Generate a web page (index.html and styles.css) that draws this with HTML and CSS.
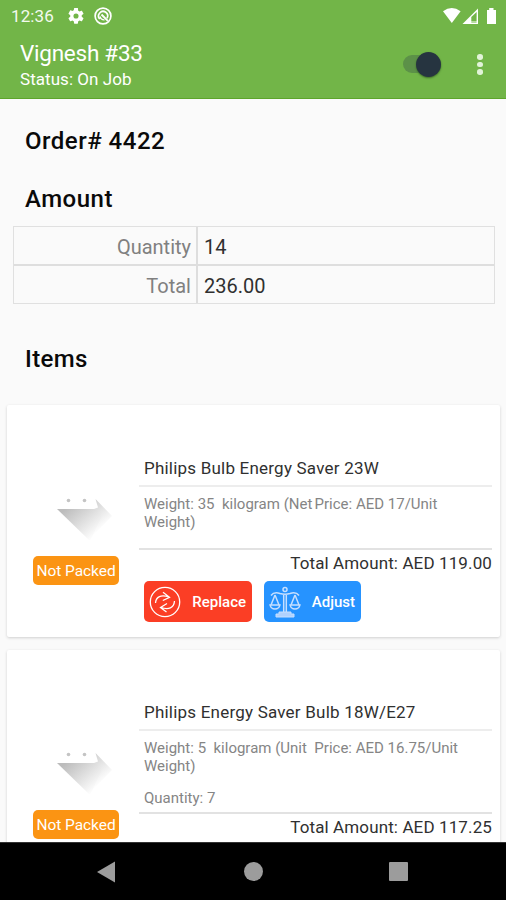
FILE: index.html
```html
<!DOCTYPE html>
<html lang="en">
<head>
<meta charset="utf-8">
<title>Order 4422</title>
<link rel="stylesheet" href="styles.css">
</head>
<body>
<svg class="defs" width="0" height="0">
  <defs>
    <linearGradient id="shade" gradientUnits="userSpaceOnUse" x1="14" y1="8" x2="40" y2="38">
      <stop offset="0" stop-color="#bcbcbc"/><stop offset="1" stop-color="#fefefe"/>
    </linearGradient>
    <linearGradient id="shade-side" gradientUnits="userSpaceOnUse" x1="36" y1="6" x2="52" y2="26">
      <stop offset="0" stop-color="#d2d2d2"/><stop offset="1" stop-color="#fefefe"/>
    </linearGradient>
    <symbol id="bag" viewBox="0 0 60 46">
      <path d="M39.500 2 56 19 33 43 38 12 42 10.500Z" fill="url(#shade-side)"/>
      <path d="M1 12H39L46 19 34 44Z" fill="url(#shade)"/>
      <circle cx="12.5" cy="3.5" r="1.8" fill="#c4c4c4"/><circle cx="28.5" cy="3.5" r="1.8" fill="#c4c4c4"/>
    </symbol>
  </defs>
</svg>
<div class="screen">
  <header class="top">
    <div class="status">
      <span class="clock">12:36</span>
      <svg class="gear" viewBox="2 2 20 20"><path fill="#fff" fill-rule="evenodd" d="M19.14 12.94c.04-.3.06-.61.06-.94s-.02-.64-.07-.94l2.03-1.58a.49.49 0 0 0 .12-.61l-1.92-3.32a.49.49 0 0 0-.59-.22l-2.39.96a7 7 0 0 0-1.62-.94l-.36-2.54A.48.48 0 0 0 13.92 2h-3.84a.48.48 0 0 0-.48.41l-.36 2.54a7 7 0 0 0-1.62.94l-2.39-.96a.48.48 0 0 0-.59.22L2.72 8.87a.48.48 0 0 0 .12.61l2.03 1.58a7 7 0 0 0 0 1.88l-2.03 1.58a.49.49 0 0 0-.12.61l1.92 3.32c.12.22.37.29.59.22l2.39-.96c.5.38 1.03.7 1.62.94l.36 2.54c.05.24.24.41.48.41h3.84c.24 0 .44-.17.47-.41l.36-2.54a7 7 0 0 0 1.62-.94l2.39.96c.22.08.47 0 .59-.22l1.92-3.32a.48.48 0 0 0-.12-.61zM12 15.2a3.2 3.2 0 1 1 0-6.4 3.2 3.2 0 0 1 0 6.4z"/></svg>
      <svg class="sync" viewBox="0 0 18 18" fill="none" stroke="#fff"><circle cx="9" cy="9" r="7.9" stroke-width="1.7"/><path d="M5.8 12A4.500 4.500 0 1 1 13 11.200" stroke-width="1.7"/><path d="M7.500 7.500 13.800 13.800" stroke-width="1.9"/><path d="M6 9.500Q7 13 10.500 12.800" stroke-width="1.3"/></svg>
      <svg class="signals" viewBox="0 0 56 18"><path d="M1 4.2Q9.8-2.4 18.6 4.2L9.8 16Z" fill="#fff"/><path d="M20.5 17 36 1.5V17Z" fill="#fff"/><path d="M29.300 10 34.600 5V14H29.300Z" fill="#72b548"/><path d="M29.300 14H34.600V16H29.300Z" fill="#b5db9e"/><path d="M45 3H47.2V1H51.5V3H54V17H45Z" fill="#fff"/></svg>
    </div>
    <div class="bar">
      <div class="who"><div class="name"><span>Vignesh #33</span></div><div class="job"><span>Status: On Job</span></div></div>
      <div class="switch"><div class="thumb"></div></div>
      <div class="more"><i></i><i></i><i></i></div>
    </div>
  </header>
  <main class="content">
    <h2 class="order">Order# 4422</h2>
    <h2 class="amount">Amount</h2>
    <div class="table">
      <div class="cell key">Quantity</div><div class="cell">14</div>
      <div class="cell key">Total</div><div class="cell">236.00</div>
    </div>
    <h2 class="items">Items</h2>
    <article class="card">
      <div class="thumbcol"><svg class="pic"><use href="#bag"/></svg><div class="badge">Not Packed</div></div>
      <div class="info">
        <div class="title">Philips Bulb Energy Saver 23W</div>
        <div class="desc"><div>Weight: 35&nbsp; kilogram (Net<span class="thin"> </span>Price: AED 17/Unit</div><div>Weight)</div></div>
        <div class="total">Total Amount: AED 119.00</div>
        <div class="actions">
          <div class="btn red">
            <svg width="32" height="32" viewBox="0 0 32 32" fill="none" stroke="#fff" stroke-width="1.3"><circle cx="16" cy="16" r="14.7"/><path d="M6.500 17C7 10.500 12 8.500 20 11M14 6.200 20.500 11.300 13.800 14.500M25.500 15C25 22 19.500 24 12 21.500M18 17.500 11.500 21.500 17.500 26"/></svg>
            <span>Replace</span>
          </div>
          <div class="btn blue">
            <svg width="32" height="32" viewBox="0 0 32 32" fill="none" stroke="#c6dfff" stroke-width="1.5"><circle cx="16" cy="3.500" r="2"/><path d="M2 9.500Q5 5.500 11 7.500Q16 9 21 7.500Q27 5.500 30 9.500M14.700 8V26M17.300 8V26M6 9 2 19M6 9 10 19M26 9 22 19M26 9 30 19"/><path d="M1 19H11Q10 23 6 23Q2 23 1 19ZM21 19H31Q30 23 26 23Q22 23 21 19Z" stroke-width="1.300"/><path d="M10 26H22V28H25V31H7V28H10Z" fill="#b0d1fd" stroke-width="1"/></svg>
            <span>Adjust</span>
          </div>
        </div>
      </div>
    </article>
    <article class="card second">
      <div class="thumbcol"><svg class="pic"><use href="#bag"/></svg><div class="badge">Not Packed</div></div>
      <div class="info">
        <div class="title">Philips Energy Saver Bulb 18W/E27</div>
        <div class="desc tall"><div>Weight: 5&nbsp; kilogram (Unit&nbsp; Price: AED 16.75/Unit</div><div>Weight)</div><div class="qty">Quantity: 7</div></div>
        <div class="total">Total Amount: AED 117.25</div>
      </div>
    </article>
  </main>
  <nav class="nav">
    <svg width="19" height="22" viewBox="0 0 19 22"><path d="M0 11 18 .500V21.500Z" fill="#9c9c9c"/></svg>
    <div class="home"></div>
    <div class="recent"></div>
  </nav>
</div>
</body>
</html>
```
FILE: styles.css
```css
* { box-sizing: border-box; }
body { margin: 0; font-family: Roboto, "Liberation Sans", sans-serif; background: #fafafa; color: #222; }
.defs { display: block; height: 0; }
.screen { width: 506px; height: 900px; display: flex; flex-direction: column; overflow: hidden; white-space: nowrap; }
.top { height: 99px; flex: none; background: #72b548; border-bottom: 1px solid #5da52b; color: #fff; }
.status { height: 32px; display: flex; align-items: center; padding: 0 8px 0 11px; }
.clock { font-size: 17px; letter-spacing: .1px; width: 57px; color: #f3faee; }
.gear { width: 16px; height: 16px; }
.sync { width: 18px; height: 18px; margin-left: 10px; }
.signals { width: 56px; height: 18px; margin-left: auto; }
.bar { display: flex; height: 65px; padding-left: 20px; }
.who { width: 383px; padding-top: 7px; }
.name { font-size: 22.5px; line-height: 28px; letter-spacing: -.25px; }
.job { font-size: 17px; line-height: 25px; letter-spacing: .05px; }
.switch { width: 38px; height: 18px; margin-top: 23px; border-radius: 9px; background: #5c9148; display: flex; justify-content: flex-end; align-items: center; }
.thumb { width: 25px; height: 25px; flex: none; border-radius: 50%; background: #263440; box-shadow: 0 1px 2px #3c6b28; }
.more { display: flex; flex-direction: column; gap: 2px; margin: 22px 0 0 36px; }
.more i { width: 5.5px; height: 5.5px; border-radius: 50%; background: #e2f3d9; }
.content { flex: 1; min-height: 0; overflow: hidden; background: #fafafa; }
h2 { margin: 0 0 0 25px; font-size: 24px; line-height: 30px; font-weight: 500; color: #0a0a0a; letter-spacing: .5px; }
.order { margin-top: 27px; }
.amount { margin-top: 28px; }
.items { margin-top: 40px; letter-spacing: .35px; }
.table { display: grid; grid-template-columns: 184px 1fr; grid-template-rows: 39px 37px; margin: 12px 0 0 13px; width: 482px; height: 78px; border: 1px solid #e0e0e0; }
.cell { padding: 3px 0 0 6px; font-size: 20px; display: flex; align-items: center; color: #303030; }
.key { justify-content: flex-end; padding: 3px 5px 0 0; color: #808080; border-right: 2px solid #dedede; }
.cell:nth-child(-n+2) { border-bottom: 2px solid #dedede; }
.card { display: flex; width: 493px; height: 232px; margin: 31px 0 0 7px; background: #fff; border-radius: 2px; box-shadow: 0 1px 3px #cfcfcf; }
.second { height: 250px; margin-top: 13px; }
.thumbcol { width: 132px; padding: 92px 0 0 26px; }
.second .thumbcol { padding-top: 101px; }
.pic { display: block; width: 60px; height: 46px; margin-left: 23px; }
.badge { width: 86px; height: 29px; margin-top: 13px; border-radius: 5px; background: #fb9413; color: #fff; font-size: 15.5px; line-height: 30px; letter-spacing: -.05px; text-align: center; }
.info { width: 353px; padding-top: 50px; }
.second .info { padding-top: 49px; }
.title { height: 32px; border-bottom: 2px solid #ededed; padding-left: 5px; font-size: 17px; line-height: 26px; letter-spacing: .21px; color: #303030; }
.desc { height: 63px; border-bottom: 2px solid #e2e2e2; padding: 8px 0 0 5px; font-size: 15px; line-height: 18px; color: #858585; }
.thin { word-spacing: -1.5px; }
.tall { height: 83px; }
.qty { margin-top: 14px; }
.total { text-align: right; font-size: 17px; line-height: 26px; letter-spacing: .12px; color: #303030; }
.actions { display: flex; gap: 12px; padding: 5px 0 0 5px; }
.btn { height: 41px; display: flex; align-items: center; justify-content: space-between; border-radius: 5px; padding: 0 6px 0 5px; color: #fff; font-size: 15px; font-weight: 500; }
.red { width: 108px; background: #fb3e25; }
.blue { width: 97px; background: #2693ff; }
.nav { height: 58px; flex: none; display: flex; align-items: center; background: #000; border-top: 1px solid #333; padding-left: 97px; }
.home { width: 19px; height: 19px; border-radius: 50%; background: #9c9c9c; margin-left: 128px; }
.recent { width: 19px; height: 19px; background: #9c9c9c; margin-left: 126px; border-radius: 1px; }
```
